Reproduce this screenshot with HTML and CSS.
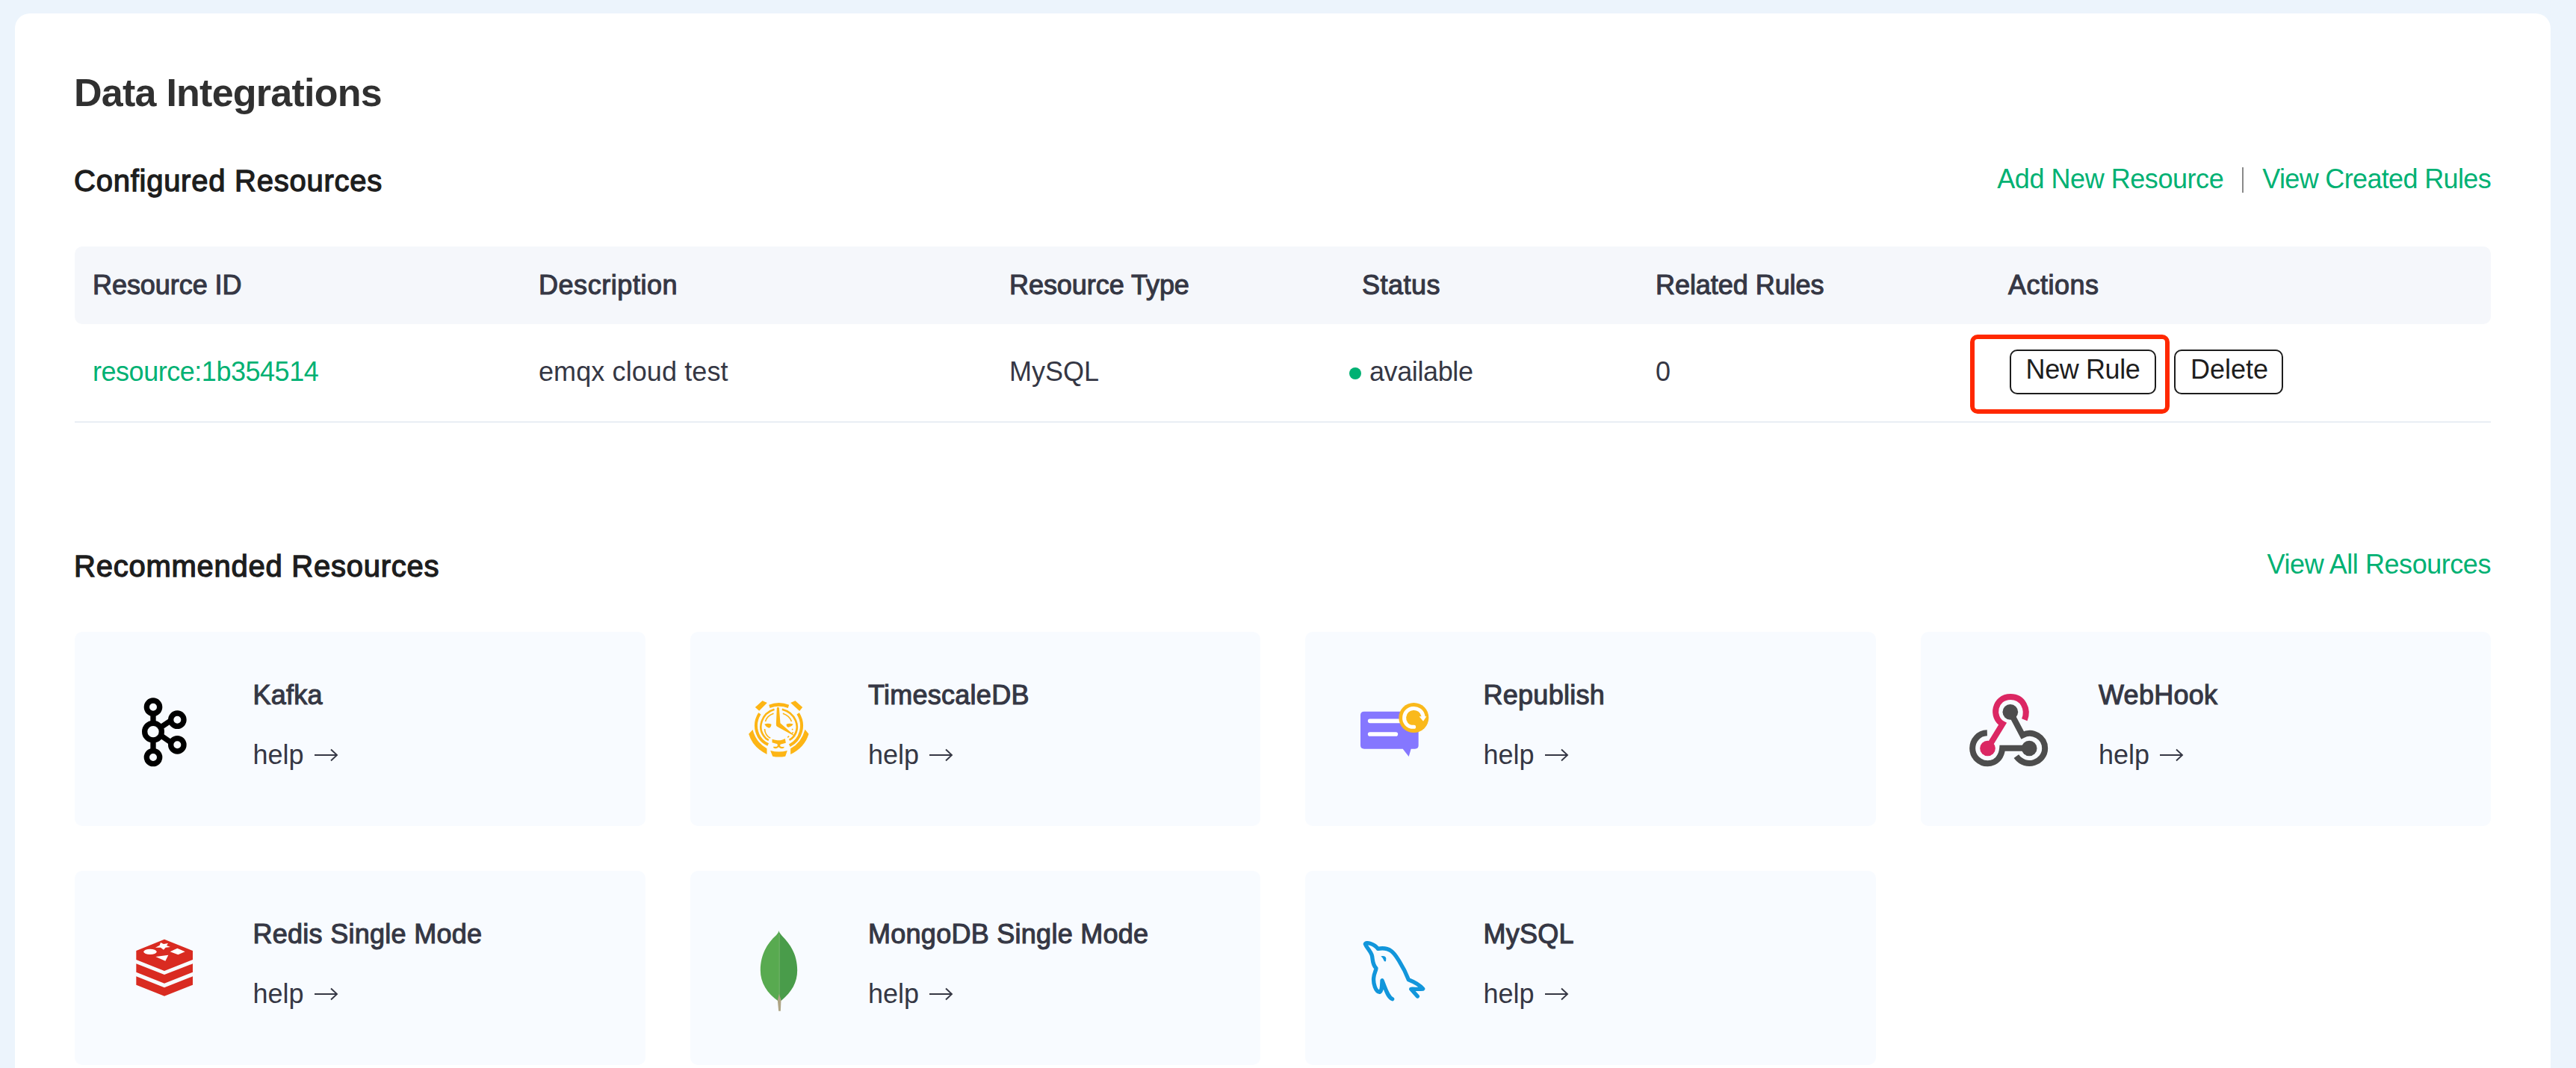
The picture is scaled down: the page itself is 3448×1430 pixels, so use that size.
FILE: index.html
```html
<!DOCTYPE html>
<html lang="en">
<head>
<meta charset="utf-8">
<title>Data Integrations</title>
<link rel="stylesheet" href="styles.css">
</head>
<body>
<svg class="defs" width="0" height="0" aria-hidden="true">
  <symbol id="arrow" viewBox="0 0 32 18">
    <path d="M0 9h30M22 1.5l8 7.5-8 7.5" fill="none" stroke="currentColor" stroke-width="1.9"/>
  </symbol>
</svg>
<main class="panel">
  <h1 class="title">Data Integrations</h1>

  <section>
    <div class="section-head">
      <h2>Configured Resources</h2>
      <nav class="links">
        <a class="add-link">Add New Resource</a>
        <span class="divider"></span>
        <a class="rules-link">View Created Rules</a>
      </nav>
    </div>
    <div class="table">
      <div class="row head">
        <div class="th-id">Resource ID</div>
        <div class="th-desc">Description</div>
        <div class="th-type">Resource Type</div>
        <div class="th-status">Status</div>
        <div>Related Rules</div>
        <div class="th-actions">Actions</div>
      </div>
      <div class="row body">
        <div><a class="id-link">resource:1b354514</a></div>
        <div class="desc">emqx cloud test</div>
        <div>MySQL</div>
        <div class="status"><i class="dot"></i>available</div>
        <div>0</div>
        <div class="actions">
          <button class="btn new-rule">New Rule</button>
          <button class="btn delete">Delete</button>
          <span class="highlight"></span>
        </div>
      </div>
    </div>
  </section>

  <section class="recommended">
    <div class="section-head">
      <h2>Recommended Resources</h2>
      <nav class="links"><a class="all-link">View All Resources</a></nav>
    </div>
    <div class="cards">
      <article class="card">
        <svg class="logo" viewBox="0 48 360 360">
          <g fill="none" stroke="#000" stroke-width="22">
            <path d="M135 172v30M135 276v36M168 220l38-26M168 256l38 26"/>
            <circle cx="135" cy="239" r="34"/>
            <circle cx="135" cy="140" r="26"/>
            <circle cx="135" cy="342" r="26"/>
            <circle cx="232" cy="191" r="26"/>
            <circle cx="232" cy="292" r="26"/>
          </g>
        </svg>
        <div class="info"><h3>Kafka</h3><a class="help">help <svg class="arrow"><use href="#arrow"/></svg></a></div>
      </article>
      <article class="card">
        <svg class="logo" viewBox="70.5 48 360 360">
          <g fill="#fdb515">
            <path d="M151 141l29-26 19 8-32 32zM341 141l-29-26-19 8 36 33z"/>
            <path d="M206 131q40-16 81 0l-4 13q-37-14-73 0z"/>
            <path d="M141 231l-16 17q16 54 73 82v-23q-44-25-57-76zM351 230l15 18q-16 54-73 82v-23q44-25 58-77z"/>
            <path d="M212 315q34 9 68 0l-8 23q-26 5-51 0zM219 269q14 4 21 5h12q8-1 19-7l3 17-22 6-1 6q4 6 16 3v5q-12 7-22-3-10 10-21 3v-5q12 2 17-3l-1-7-21-6z"/>
            <path d="M238 143q5-6 9 0l5 62 63 55-74-40q-7-3-6-12z"/>
            <path d="M188 209q15-6 28 0-1 14-10 15-12-4-18-15zM304 209q-15-6-28 0 1 14 10 12 12-3 18-12z"/>
          </g>
          <g fill="none" stroke="#fdb515">
            <path stroke-width="12" d="M169 166c-29 46-13 104 34 125M323 166c29 46 13 104-34 129"/>
            <path stroke-width="8" d="M228 149c-52 16-68 74-42 108 5 8 11 13 19 16M259 149c54 14 76 70 46 110-5 6-10 10-17 13"/>
            <path stroke-width="5" d="M225 166c-17 6-29 17-33 32M262 166c17 6 30 18 35 32M189 228c1 18 9 30 23 37M302 228l-3 4M287 257l-6 5M304 242l-6 4"/>
          </g>
        </svg>
        <div class="info"><h3>TimescaleDB</h3><a class="help">help <svg class="arrow"><use href="#arrow"/></svg></a></div>
      </article>
      <article class="card">
        <svg class="logo" viewBox="81 48 360 360">
          <path fill="#8577ff" d="M138 158h204q14 0 14 14v122q0 14-14 14h-16l-9 31-24-31H138q-15 0-15-14V172q0-14 15-14z"/>
          <path stroke="#fff" stroke-width="17" stroke-linecap="round" d="M161 196h124M161 249h104"/>
          <circle cx="337" cy="183" r="60" fill="#fab91b"/>
          <path fill="none" stroke="#fff" stroke-width="15" stroke-linecap="round" d="M338 220C310 221 297 200 299 180C303 136 366 133 375 176"/>
          <path fill="#fff" d="M359 178l29 0-13 19z"/>
        </svg>
        <div class="info"><h3>Republish</h3><a class="help">help <svg class="arrow"><use href="#arrow"/></svg></a></div>
      </article>
      <article class="card">
        <svg class="logo" viewBox="91.5 48 360 360">
          <g fill="none" stroke-width="24">
            <path stroke="#4d4d4d" d="M178 244C143 245 119 273 119 306C119 340 147 367 180 367C213 367 236 342 239 305H347M271 160l49 93C362 231 410 262 410 306C410 362 333 391 295 338"/>
            <path stroke="#db2763" d="M180 306l60-98C193 182 206 99 272 99C322 99 345 149 328 191"/>
          </g>
          <circle cx="271" cy="160" r="31" fill="#4d4d4d"/>
          <circle cx="347" cy="306" r="31" fill="#4d4d4d"/>
          <circle cx="180" cy="306" r="31" fill="#db2763"/>
        </svg>
        <div class="info"><h3>WebHook</h3><a class="help">help <svg class="arrow"><use href="#arrow"/></svg></a></div>
      </article>
      <article class="card">
        <svg class="logo" viewBox="0 48 360 360">
          <path fill="#d92b21" d="M67 159l113-46 114 46v36l-114 45-113-45zM67 211l113 44 114-44v34l-114 45-113-45zM67 262l113 45 114-45v34l-114 45-113-45z"/>
          <g fill="#fff">
            <ellipse cx="123" cy="163" rx="26" ry="11"/>
            <path d="M203 163l29-14 31 14-28 12zM145 183l51-7-12 24zM165 126l12 6 18-3-6 9 15 6-19 2-8 9-12-9-21 0 17-9z"/>
          </g>
        </svg>
        <div class="info"><h3>Redis Single Mode</h3><a class="help">help <svg class="arrow"><use href="#arrow"/></svg></a></div>
      </article>
      <article class="card">
        <svg class="logo" viewBox="10.5 48 360 360">
          <path fill="#58aa50" d="M185 78q1 8-9 18c-42 37-64 86-64 141 0 50 26 93 73 125l5-3V96z"/>
          <path fill="#499c4a" d="M185 78q2 8 13 20c42 42 62 86 62 140 0 48-22 87-64 121l-8 2V92z"/>
          <path stroke="#83bd76" stroke-width="2" d="M188 94v245"/>
          <path fill="#aea485" d="M187 332l8 26-2 43h-8l-4-43z"/>
        </svg>
        <div class="info"><h3>MongoDB Single Mode</h3><a class="help">help <svg class="arrow"><use href="#arrow"/></svg></a></div>
      </article>
      <article class="card">
        <svg class="logo" viewBox="81 48 360 360">
          <path fill="none" stroke="#1296db" stroke-width="16" stroke-linecap="round" stroke-linejoin="round" d="M251 353C231 344 223 309 210 278C209 297 210 320 200 325C183 324 174 290 176 268C177 250 186 238 186 229C168 212 174 190 168 175C161 157 146 144 142 132C145 122 180 131 193 151C249 141 263 177 280 203C297 230 309 257 316 275C344 286 359 294 374 312C354 315 340 312 326 313L352 342"/>
          <path fill="#1296db" d="M205 181q18-4 21 9l-1 12h-6l-7-14z"/>
        </svg>
        <div class="info"><h3>MySQL</h3><a class="help">help <svg class="arrow"><use href="#arrow"/></svg></a></div>
      </article>
    </div>
  </section>
</main>
</body>
</html>
```
FILE: styles.css
```css
* {
  box-sizing: border-box;
}

html,
body {
  height: 100%;
}

body {
  margin: 0;
  padding: 18px 34px 0 20px;
  overflow: hidden;
  background: #ecf4fc;
  color: #353744;
  font-family: "Liberation Sans", Arial, sans-serif;
  font-size: 36px;
}

.defs {
  position: absolute;
}

.panel {
  height: 1440px;
  padding: 76px 80px 0 80px;
  background: #fff;
  border-radius: 20px 20px 0 0;
}

.title {
  margin: 0 0 64px -1px;
  color: #303030;
  font-size: 52px;
  line-height: 60px;
  letter-spacing: -0.75px;
}

.section-head {
  display: flex;
  justify-content: space-between;
  align-items: flex-start;
  margin-bottom: 64px;
}

h2 {
  margin: 0 0 0 -1px;
  color: #1d1d1d;
  font-size: 40px;
  font-weight: 400;
  line-height: 48px;
  letter-spacing: 0.75px;
  -webkit-text-stroke: 1.3px currentColor;
}

.links {
  display: flex;
  line-height: 43px;
}

a {
  color: #00b173;
}

.add-link {
  letter-spacing: -0.45px;
}

.rules-link {
  letter-spacing: -0.65px;
}

.all-link {
  letter-spacing: -0.45px;
}

.divider {
  width: 2px;
  height: 34px;
  margin: 6px 25px 0;
  background: #8a8a8a;
}

.row {
  display: grid;
  grid-template-columns: 597px 630px 472px 393px 472px 670px;
  align-items: center;
}

.row > div {
  padding-left: 24px;
}

.head {
  height: 104px;
  background: #f5f7fb;
  border-radius: 10px;
  letter-spacing: -0.05px;
  -webkit-text-stroke: 1.1px currentColor;
}

.head .th-desc {
  letter-spacing: 0.55px;
}

.head .th-status,
.head .th-actions {
  letter-spacing: 0.5px;
}

.body {
  height: 132px;
  border-bottom: 2px solid #e9eef4;
}

.body > div {
  padding-bottom: 2px;
}

.id-link {
  letter-spacing: -0.47px;
}

.desc {
  letter-spacing: 0.1px;
}

.row > .status {
  display: flex;
  align-items: center;
  gap: 11px;
  padding-left: 7px;
  letter-spacing: -0.4px;
}

.dot {
  width: 16px;
  height: 16px;
  margin-top: 3px;
  border-radius: 50%;
  background: #00b173;
}

.row > .actions {
  position: relative;
  display: flex;
  gap: 24px;
  padding: 0 0 2px 26px;
}

.btn {
  height: 60px;
  padding: 0 0 6px;
  border: 2px solid #1d1d1d;
  border-radius: 10px;
  background: #fff;
  color: #1d1d1d;
  font: inherit;
  line-height: 50px;
}

.new-rule {
  width: 196px;
  letter-spacing: -0.4px;
}

.delete {
  width: 146px;
  padding-left: 2px;
}

.highlight {
  position: absolute;
  left: -27px;
  top: -20px;
  width: 267px;
  height: 106px;
  border: 6px solid #ff2800;
  border-radius: 10px;
}

.recommended {
  margin-top: 168px;
}

.cards {
  display: grid;
  grid-template-columns: repeat(4, 1fr);
  gap: 60px;
}

.card {
  display: flex;
  height: 260px;
  background: #f8fbff;
  border-radius: 10px;
}

.logo {
  width: 120px;
  height: 120px;
  margin: 70px 58.5px 0 60px;
}

.info {
  padding-top: 61px;
}

h3 {
  margin: 0 0 32px;
  font-size: 36px;
  font-weight: 400;
  line-height: 48px;
  letter-spacing: 0.27px;
  -webkit-text-stroke: 1.1px currentColor;
}

.help {
  display: flex;
  align-items: center;
  gap: 14px;
  color: #353744;
  line-height: 48px;
}

.arrow {
  width: 32px;
  height: 18px;
}
```
